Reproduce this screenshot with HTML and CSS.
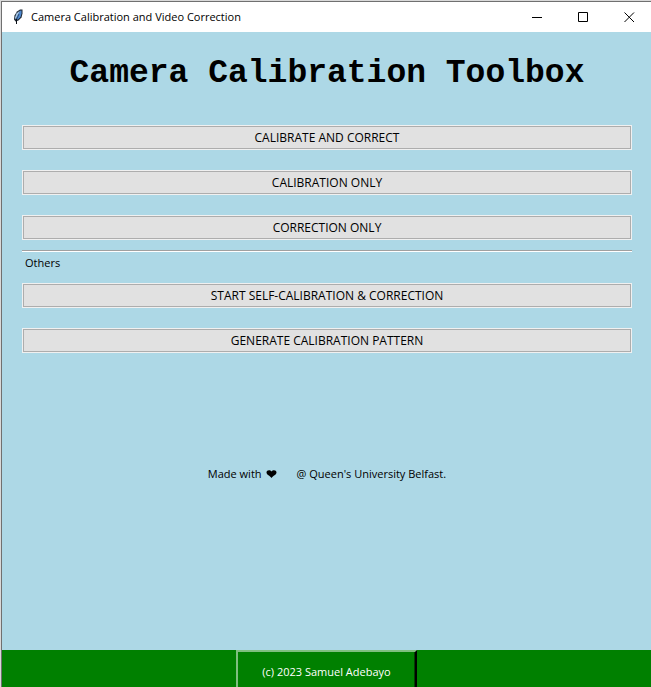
FILE: index.html
```html
<!DOCTYPE html>
<html lang="en">
<head>
<meta charset="utf-8">
<title>Camera Calibration and Video Correction</title>
<link rel="stylesheet" href="styles.css">
</head>
<body>
<div class="window">
  <header class="titlebar">
    <svg class="feather" width="16" height="16" viewBox="0 0 16 16" aria-hidden="true">
      <path d="M10 .5H12.500V4.500L11.500 8.500 8.500 11.500 5.500 12.500 4 10.500 4.500 6.500 7 2.500Z" fill="#1d2733"/>
      <path d="M10.500 1.500H11.500V4.500L10.500 8 8 10.500H6.500V8L8.500 4Z" fill="#4f8ad0"/>
      <path d="M10 1.500 6.500 4.500 5 8.500 5.500 10.500 7 7.500Z" fill="#a9c9e8"/>
      <path d="M9 5 6.500 10.500" fill="none" stroke="#2a4a75"/>
      <path d="M6.500 10V15" fill="none" stroke="#0b0f16"/>
    </svg>
    <span class="caption">Camera Calibration and Video Correction</span>
    <div class="controls">
      <button class="control" type="button" aria-label="Minimize"><svg width="11" height="11" viewBox="0 0 11 11"><path d="M0 5.500H10"/></svg></button>
      <button class="control" type="button" aria-label="Maximize"><svg width="11" height="11" viewBox="0 0 11 11"><path d="M.5 .5H9.500V9.500H.5Z"/></svg></button>
      <button class="control" type="button" aria-label="Close"><svg width="11" height="11" viewBox="0 0 11 11"><path d="M.5 .5 10 10M10 .5 .5 10"/></svg></button>
    </div>
  </header>
  <main class="content">
    <h1 class="heading">Camera Calibration Toolbox</h1>
    <div class="group">
      <button class="action" type="button">CALIBRATE AND CORRECT</button>
      <button class="action" type="button">CALIBRATION ONLY</button>
      <button class="action" type="button">CORRECTION ONLY</button>
    </div>
    <hr class="separator">
    <h2 class="label">Others</h2>
    <div class="group">
      <button class="action" type="button">START SELF-CALIBRATION &amp; CORRECTION</button>
      <button class="action" type="button">GENERATE CALIBRATION PATTERN</button>
    </div>
    <p class="credit">
      <span>Made with</span>
      <svg class="heart" width="11" height="8" viewBox="0 0 11 8" role="img" aria-label="love"><path d="M5.500 1.500C6.500-.3 10.500-.5 10.500 2.500 10.500 5 7 5.500 5.500 8 4 5.500 .5 5 .5 2.500 .5-.5 4.500-.3 5.500 1.500Z"/></svg>
      <span>@ Queen's University Belfast.</span>
    </p>
  </main>
  <footer class="footer">
    <button class="copyright" type="button">(c) 2023 Samuel Adebayo</button>
  </footer>
</div>
</body>
</html>
```
FILE: styles.css
```css
* {
  box-sizing: border-box;
}

body {
  margin: 0;
  padding: 1px 0 0 1px;
  background: #d9d9d9;
  color: #000;
  font: 11px/16px "Open Sans", "Noto Sans", sans-serif;
}

button {
  font: inherit;
  color: inherit;
  border-radius: 0;
}

.window {
  display: flex;
  flex-direction: column;
  height: calc(100vh - 1px);
  overflow: hidden;
  border: solid #707070;
  border-width: 1px 0 0 1px;
  background: #add8e6;
}

.titlebar {
  display: flex;
  flex: none;
  align-items: center;
  height: 30px;
  padding-left: 8px;
  background: #fff;
}

.feather {
  flex: none;
  margin-right: 5px;
}

.caption {
  white-space: nowrap;
}

.controls {
  display: flex;
  margin-left: auto;
}

.control {
  display: flex;
  align-items: center;
  justify-content: center;
  width: 46px;
  height: 30px;
  padding: 0 0 0 2px;
  border: 0;
  background: transparent;
}

.control svg {
  fill: none;
  stroke: #000;
}

.content {
  flex: 1;
  padding: 22px 19px 0 20px;
}

.heading {
  margin: 0 0 31px;
  font: bold 33px/40px "Liberation Mono", monospace;
  text-align: center;
  white-space: nowrap;
}

.group {
  display: grid;
  gap: 20px;
}

.action {
  height: 25px;
  padding: 0;
  border: 1px solid #f0f0f0;
  outline: 1px solid #adadad;
  outline-offset: -2px;
  background: #e1e1e1;
  font-size: 12px;
}

.separator {
  height: 2px;
  margin: 10px 0 3px;
  border: solid;
  border-width: 1px 0;
  border-color: #a0a0a0 transparent #fff;
}

.label {
  margin: 0 0 12px 3px;
  font: inherit;
}

.credit {
  display: flex;
  align-items: center;
  justify-content: center;
  margin: 113px 0 0;
}

.heart {
  margin: 0 20px 0 4px;
}

.footer {
  display: flex;
  flex: none;
  justify-content: center;
  align-items: flex-start;
  height: 37px;
  overflow: hidden;
  background: #008000;
}

.copyright {
  flex: none;
  height: 44px;
  padding: 0 24px;
  border: 2px solid;
  border-color: #7fbf7f #000 #000 #7fbf7f;
  box-shadow: inset -1px 0 #004000;
  background: #008000;
  color: #fff;
}
```
